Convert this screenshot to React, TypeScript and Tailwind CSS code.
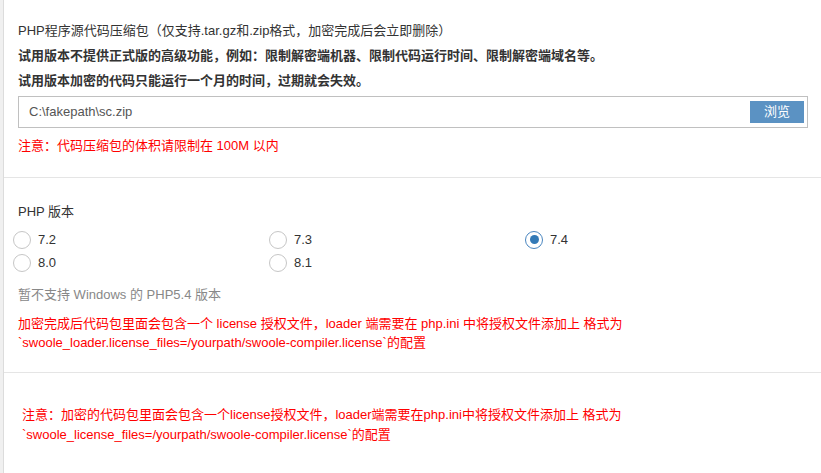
import React from "react";

const versions = [
  { v: "7.2", checked: false },
  { v: "7.3", checked: false },
  { v: "7.4", checked: true },
  { v: "8.0", checked: false },
  { v: "8.1", checked: false },
];

function Radio({ label, checked }: { label: string; checked: boolean }) {
  return (
    <label className="flex items-center h-[23px] gap-[7px] text-[13px] text-[#333]">
      <span
        className={
          checked
            ? "w-[18px] h-[18px] rounded-full border border-[#4a86c0] flex items-center justify-center bg-white"
            : "w-[18px] h-[18px] rounded-full border border-[#c6c6c6] bg-white"
        }
      >
        {checked && <span className="w-[9px] h-[9px] rounded-full bg-[#337ab7]" />}
      </span>
      <span>{label}</span>
    </label>
  );
}

export default function App() {
  return (
    <div className="flex w-[821px] h-[473px] bg-white overflow-hidden font-['Liberation_Sans','Noto_Sans_CJK_SC',sans-serif]">
      {/* left strip */}
      <div className="w-[3px] shrink-0 bg-[#f0f0f0]" />
      <div className="w-px shrink-0 bg-[#dcdcdc]" />

      <div className="flex-1 flex flex-col">
        {/* upload section */}
        <div className="pt-[18px] pl-[14px] pr-[13px] pb-[21px] border-b border-[#e5e5e5]">
          <div className="text-[13px] leading-[25px] text-[#333]">
            PHP程序源代码压缩包（仅支持.tar.gz和.zip格式，加密完成后会立即删除）
          </div>
          <div className="text-[13px] leading-[25px] text-[#333] font-bold">
            试用版本不提供正式版的高级功能，例如：限制解密端机器、限制代码运行时间、限制解密端域名等。
          </div>
          <div className="text-[13px] leading-[25px] text-[#333] font-bold">
            试用版本加密的代码只能运行一个月的时间，过期就会失效。
          </div>
          <div className="mt-[3px] h-[32px] border border-[#c0c0c0] flex items-center justify-between pl-[10px] pr-[3px]">
            <span className="text-[13px] text-[#555]">C:\fakepath\sc.zip</span>
            <button className="w-[54px] h-[22px] bg-[#5b92c3] text-white text-[13px] leading-[22px]">
              浏览
            </button>
          </div>
          <div className="mt-[8px] text-[13px] leading-[20px] text-[#ff0000]">
            注意：代码压缩包的体积请限制在 100M 以内
          </div>
        </div>

        {/* version section */}
        <div className="pt-[24px] pl-[14px] pr-[13px] pb-[20px] border-b border-[#e5e5e5]">
          <div className="text-[13px] leading-[20px] text-[#333]">PHP 版本</div>
          <div className="mt-[6px] ml-[-5px] grid grid-cols-[256px_256px_256px]">
            {versions.map((item) => (
              <Radio key={item.v} label={item.v} checked={item.checked} />
            ))}
          </div>
          <div className="mt-[11px] text-[13px] leading-[20px] text-[#888]">
            暂不支持 Windows 的 PHP5.4 版本
          </div>
          <div className="mt-[9px] text-[13px] leading-[19px] text-[#ff0000]">
            加密完成后代码包里面会包含一个 license 授权文件，loader 端需要在 php.ini 中将授权文件添加上 格式为
            `swoole_loader.license_files=/yourpath/swoole-compiler.license`的配置
          </div>
        </div>

        {/* license note */}
        <div className="pt-[32px] pl-[18px] pr-[13px]">
          <div className="max-w-[640px] text-[13px] leading-[20px] text-[#ff0000]">
            注意：加密的代码包里面会包含一个license授权文件，loader端需要在php.ini中将授权文件添加上 格式为
            `swoole_license_files=/yourpath/swoole-compiler.license`的配置
          </div>
        </div>
      </div>
    </div>
  );
}
